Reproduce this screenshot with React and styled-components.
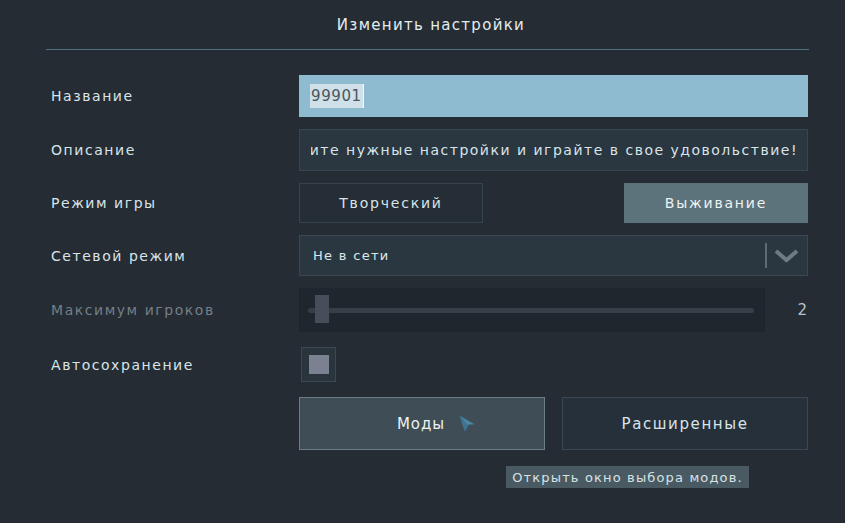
import React from "react";
import styled, { createGlobalStyle } from "styled-components";

const Global = createGlobalStyle`
  html, body { margin: 0; padding: 0; background: #252c34; }
  body { font-family: "DejaVu Sans", "Noto Sans", sans-serif; color: #d5e1e6; }
`;

const Screen = styled.div`
  width: 845px;
  height: 523px;
  background: #252c34;
  position: relative;
  overflow: hidden;
`;

const Header = styled.div`
  margin: 0 36px 0 46px;
  height: 50px;
  border-bottom: 1px solid #4b6f80;
  display: flex;
  align-items: center;
  justify-content: center;
  box-sizing: border-box;
`;

const Title = styled.h1`
  margin: 0 0 0 7px;
  font-size: 15px;
  font-weight: 400;
  letter-spacing: 1.3px;
  color: #e4ecef;
`;

const Form = styled.div`
  display: flex;
  flex-direction: column;
  gap: 12px;
  padding: 25px 37px 0 51px;
`;

const Row = styled.div`
  display: grid;
  grid-template-columns: 248px 509px;
  align-items: center;
  height: ${(p) => p.$h}px;
`;

const Label = styled.span`
  font-size: 14px;
  letter-spacing: 1.55px;
  color: ${(p) => (p.$dim ? "#737f87" : "#d8e4e8")};
`;

const TextInput = styled.div`
  height: 100%;
  background: #8ebbcf;
  display: flex;
  align-items: center;
  padding-left: 11px;
`;

const Selected = styled.span`
  background: #cfe0e8;
  color: #4a565d;
  font-size: 15px;
  letter-spacing: 0.6px;
  line-height: 24px;
  padding: 0 1px;
  border-right: 1px solid #f4f8fa;
`;

const Field = styled.div`
  height: 100%;
  box-sizing: border-box;
  background: #2a3640;
  border: 1px solid #37454f;
  display: flex;
  align-items: center;
  overflow: hidden;
`;

const DescField = styled(Field)`
  padding: 0 9px 0 11px;
`;

const Scroller = styled.div`
  flex: 1;
  display: flex;
  justify-content: flex-end;
  overflow: hidden;
  white-space: nowrap;
  font-size: 14px;
  letter-spacing: 1.5px;
  color: #d8e4e8;
`;

const Pair = styled.div`
  height: 100%;
  display: flex;
  justify-content: space-between;
`;

const ModeButton = styled.div`
  width: 184px;
  box-sizing: border-box;
  display: flex;
  align-items: center;
  justify-content: center;
  font-size: 14px;
  letter-spacing: 1.8px;
  background: ${(p) => (p.$active ? "#5d737b" : "#252e37")};
  border: 1px solid ${(p) => (p.$active ? "#5d737b" : "#36424c")};
  color: ${(p) => (p.$active ? "#eef3f5" : "#d8e4e8")};
`;

const Select = styled(Field)`
  background: #2b3740;
  border-color: #3a4853;
  padding-left: 13px;
  justify-content: space-between;
`;

const SelectText = styled.span`
  font-size: 13px;
  letter-spacing: 1.3px;
  color: #dde7eb;
`;

const SelectArrow = styled.div`
  display: flex;
  align-items: center;
  height: 100%;
  gap: 7px;
  padding-right: 8px;
`;

const Divider = styled.div`
  width: 2px;
  height: 25px;
  background: #5f6b74;
`;

const SliderRow = styled.div`
  height: 100%;
  display: flex;
  align-items: center;
  justify-content: space-between;
`;

const SliderBox = styled.div`
  width: 466px;
  height: 100%;
  background: #1f262e;
  display: flex;
  align-items: center;
  padding: 0 11px 0 9px;
  box-sizing: border-box;
`;

const Track = styled.div`
  flex: 1;
  height: 5px;
  border-radius: 3px;
  background: #363f48;
  position: relative;
`;

const Thumb = styled.div`
  position: absolute;
  left: 7px;
  top: -13px;
  width: 14px;
  height: 28px;
  background: #474e59;
`;

const Value = styled.span`
  font-size: 15px;
  color: #b9c3c8;
  padding-right: 1px;
`;

const CheckCell = styled.div`
  display: flex;
  align-items: center;
  height: 100%;
`;

const Check = styled.div`
  width: 35px;
  height: 35px;
  margin-left: 2px;
  box-sizing: border-box;
  border: 1px solid #3a4852;
  background: #29343d;
  display: flex;
  align-items: center;
  justify-content: center;
`;

const CheckMark = styled.div`
  width: 20px;
  height: 19px;
  background: #7b8190;
`;

const Actions = styled.div`
  height: 100%;
  display: flex;
  gap: 17px;
  position: relative;
`;

const ActionButton = styled.div`
  width: 246px;
  box-sizing: border-box;
  display: flex;
  align-items: center;
  justify-content: center;
  gap: 14px;
  font-size: 15px;
  letter-spacing: ${(p) => (p.$hover ? "0.9px" : "1.6px")};
  background: ${(p) => (p.$hover ? "#3e4d56" : "#26303a")};
  border: 1px solid ${(p) => (p.$hover ? "#6d7d86" : "#384752")};
  color: ${(p) => (p.$hover ? "#eef2f4" : "#d8e4e8")};
  padding-left: ${(p) => (p.$hover ? "28px" : "0")};
`;

const Tooltip = styled.div`
  position: absolute;
  left: 207px;
  top: 69px;
  width: 243px;
  height: 22px;
  background: #4a5a63;
  color: #d7e2e6;
  font-size: 13px;
  letter-spacing: 1.15px;
  display: flex;
  align-items: center;
  justify-content: center;
  white-space: nowrap;
`;

const Chevron = () => (
  <svg width="25" height="14" viewBox="0 0 25 14">
    <path d="M2 2 L12.5 11 L23 2" fill="none" stroke="#6f7b84" strokeWidth="4" strokeLinejoin="miter" />
  </svg>
);

const Pointer = () => (
  <svg width="16" height="17" viewBox="0 0 16 17">
    <path d="M1 1 L15 9 L9 10 L6 16 Z" fill="#4f87a6" stroke="#3d6c86" strokeWidth="1" strokeLinejoin="round" />
    <path d="M1 1 L9 10 L6 16 Z" fill="#3f7391" />
  </svg>
);

export default function App() {
  return (
    <Screen>
      <Global />
      <Header>
        <Title>Изменить настройки</Title>
      </Header>
      <Form>
        <Row $h={42}>
          <Label>Название</Label>
          <TextInput>
            <Selected>99901</Selected>
          </TextInput>
        </Row>
        <Row $h={42}>
          <Label>Описание</Label>
          <DescField>
            <Scroller>Выберите нужные настройки и играйте в свое удовольствие!</Scroller>
          </DescField>
        </Row>
        <Row $h={40}>
          <Label>Режим игры</Label>
          <Pair>
            <ModeButton>Творческий</ModeButton>
            <ModeButton $active>Выживание</ModeButton>
          </Pair>
        </Row>
        <Row $h={41}>
          <Label>Сетевой режим</Label>
          <Select>
            <SelectText>Не в сети</SelectText>
            <SelectArrow>
              <Divider />
              <Chevron />
            </SelectArrow>
          </Select>
        </Row>
        <Row $h={44}>
          <Label $dim>Максимум игроков</Label>
          <SliderRow>
            <SliderBox>
              <Track>
                <Thumb />
              </Track>
            </SliderBox>
            <Value>2</Value>
          </SliderRow>
        </Row>
        <Row $h={41}>
          <Label>Автосохранение</Label>
          <CheckCell>
            <Check>
              <CheckMark />
            </Check>
          </CheckCell>
        </Row>
        <Row $h={53}>
          <span />
          <Actions>
            <ActionButton $hover>
              <span>Моды</span>
              <Pointer />
            </ActionButton>
            <ActionButton>Расширенные</ActionButton>
            <Tooltip>Открыть окно выбора модов.</Tooltip>
          </Actions>
        </Row>
      </Form>
    </Screen>
  );
}
